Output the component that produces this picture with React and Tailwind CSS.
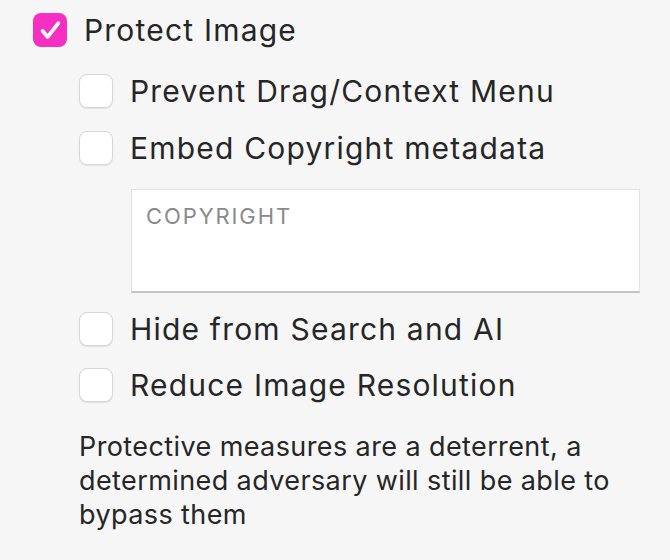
import React from 'react';

const Box = ({ checked }) =>
  checked ? (
    <span className="flex h-[34px] w-[34px] shrink-0 items-center justify-center rounded-[8px] bg-[#f52fc2]">
      <svg viewBox="0 0 24 24" className="h-[27px] w-[27px]" fill="none" stroke="white" strokeWidth="3.4" strokeLinecap="round" strokeLinejoin="round">
        <path d="M5 12.5l4.5 5.2L19 5.5" />
      </svg>
    </span>
  ) : (
    <span className="h-[34px] w-[34px] shrink-0 rounded-[8px] border border-[#d6d6d6] bg-white shadow-[0_1px_1px_rgba(0,0,0,0.08)]" />
  );

const Row = ({ label, checked }) => (
  <div className="flex h-[34px] items-center gap-[17px]">
    <Box checked={checked} />
    <span className="text-[30px] leading-none tracking-[1.2px] text-[#262626]">{label}</span>
  </div>
);

const App = () => {
  return (
    <div className="h-[560px] w-[670px] overflow-hidden bg-[#f6f6f6] pl-[33px] pt-[13px]" style={{ fontFamily: 'Inter, "Noto Sans", sans-serif' }}>
      <Row label="Protect Image" checked />
      <div className="ml-[46px] mt-[27px] flex flex-col">
        <Row label="Prevent Drag/Context Menu" />
        <div className="mt-[23px]">
          <Row label="Embed Copyright metadata" />
        </div>
        <div className="ml-[52px] mt-[24px] h-[104px] w-[509px] border border-[#e2e2e2] border-b-[#c4c4c4] border-b-2 bg-white px-[14px] pt-[15px]">
          <span className="text-[22px] leading-none tracking-[1.9px] text-[#8a8a8a]">COPYRIGHT</span>
        </div>
        <div className="mt-[19px]">
          <Row label="Hide from Search and AI" />
        </div>
        <div className="mt-[22px]">
          <Row label="Reduce Image Resolution" />
        </div>
        <p className="mt-[28px] w-[570px] text-[27px] leading-[34px] tracking-[0.4px] text-[#262626]">
          Protective measures are a deterrent, a determined adversary will still be able to bypass them
        </p>
      </div>
    </div>
  );
};

export default App;
